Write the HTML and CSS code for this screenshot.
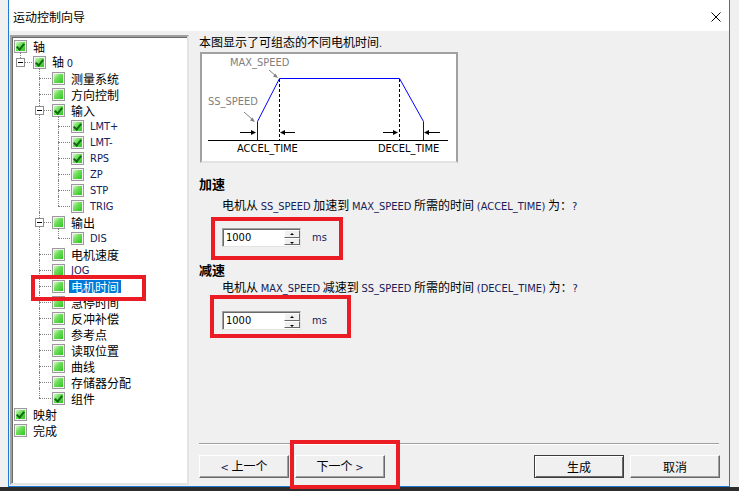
FILE: index.html
```html
<!DOCTYPE html>
<html>
	<head>
		<meta http-equiv="Content-Type" content="text/html; charset=UTF-8" />
		<title>运动控制向导</title>
		<link rel="stylesheet" href="styles.css">
	</head>
	<body>
		<div class="win">
			<div class="titlebar">
				<span class="title">运动控制向导</span>
				<svg class="close" width="10" height="10" viewBox="0 0 10 10">
					<path d="M0.5 0.5 L9.5 9.5 M9.5 0.5 L0.5 9.5" stroke="#000" stroke-width="1" fill="none"/>
				</svg>
			</div>
			<div class="content">
				<div class="tree-box">
					<ul class="tree">
						<li><div class="node"><b class="cb on"></b><span class="lbl">轴</span></div>
							<ul>
								<li><div class="node"><i class="exp"></i><b class="cb on"></b><span class="lbl">轴 <span class="lat">0</span></span></div>
									<ul>
										<li><div class="node"><b class="cb"></b><span class="lbl">测量系统</span></div></li>
										<li><div class="node"><b class="cb"></b><span class="lbl">方向控制</span></div></li>
										<li><div class="node"><i class="exp"></i><b class="cb on"></b><span class="lbl">输入</span></div>
											<ul>
												<li><div class="node"><b class="cb on"></b><span class="lbl lat">LMT+</span></div></li>
												<li><div class="node"><b class="cb on"></b><span class="lbl lat">LMT-</span></div></li>
												<li><div class="node"><b class="cb on"></b><span class="lbl lat">RPS</span></div></li>
												<li><div class="node"><b class="cb"></b><span class="lbl lat">ZP</span></div></li>
												<li><div class="node"><b class="cb"></b><span class="lbl lat">STP</span></div></li>
												<li><div class="node"><b class="cb"></b><span class="lbl lat">TRIG</span></div></li>
											</ul>
										</li>
										<li><div class="node"><i class="exp"></i><b class="cb"></b><span class="lbl">输出</span></div>
											<ul>
												<li><div class="node"><b class="cb"></b><span class="lbl lat">DIS</span></div></li>
											</ul>
										</li>
										<li><div class="node"><b class="cb"></b><span class="lbl">电机速度</span></div></li>
										<li><div class="node"><b class="cb"></b><span class="lbl lat">JOG</span></div></li>
										<li><div class="node"><b class="cb"></b><span class="lbl sel">电机时间</span></div></li>
										<li><div class="node"><b class="cb"></b><span class="lbl">急停时间</span></div></li>
										<li><div class="node"><b class="cb"></b><span class="lbl">反冲补偿</span></div></li>
										<li><div class="node"><b class="cb"></b><span class="lbl">参考点</span></div></li>
										<li><div class="node"><b class="cb"></b><span class="lbl">读取位置</span></div></li>
										<li><div class="node"><b class="cb"></b><span class="lbl">曲线</span></div></li>
										<li><div class="node"><b class="cb"></b><span class="lbl">存储器分配</span></div></li>
										<li><div class="node"><b class="cb on"></b><span class="lbl">组件</span></div></li>
									</ul>
								</li>
							</ul>
						</li>
						<li><div class="node"><b class="cb on"></b><span class="lbl">映射</span></div></li>
						<li><div class="node"><b class="cb"></b><span class="lbl">完成</span></div></li>
					</ul>
				</div>

				<div class="main">
					<div class="intro">本图显示了可组态的不同电机时间<span class="lat">.</span></div>
					<div class="chart">
						<svg width="254" height="107" viewBox="0 0 254 107">
							<line x1="6" y1="86.5" x2="246" y2="86.5" stroke="#000"/>
							<line x1="77.5" y1="25" x2="77.5" y2="86" stroke="#000" stroke-dasharray="3 2"/>
							<line x1="197.5" y1="25" x2="197.5" y2="86" stroke="#000" stroke-dasharray="3 2"/>
							<polyline points="55.5,86 55.5,67.5 77.5,24.5 197.5,24.5 221.5,67.5 221.5,86" fill="none" stroke="#0000ff"/>

							<g stroke="#000">
								<line x1="38" y1="78.5" x2="50" y2="78.5"/>
								<line x1="82" y1="78.5" x2="93" y2="78.5"/>
								<line x1="181" y1="78.5" x2="192" y2="78.5"/>
								<line x1="226" y1="78.5" x2="238" y2="78.5"/>
							</g>
							<g fill="#000">
								<polygon points="54,78.5 49,76 49,81"/>
								<polygon points="78,78.5 83,76 83,81"/>
								<polygon points="196,78.5 191,76 191,81"/>
								<polygon points="222,78.5 227,76 227,81"/>
							</g>

							<g stroke="#808080">
								<line x1="67" y1="16" x2="74" y2="22"/>
								<line x1="42" y1="58" x2="51" y2="66"/>
							</g>
							<g fill="#808080">
								<polygon points="76,24 71,22.5 73.5,19.5"/>
								<polygon points="53,68 48,66.5 50.5,63.5"/>
							</g>

							<text class="tag" x="28" y="12">MAX_SPEED</text>
							<text class="tag" x="6" y="51">SS_SPEED</text>
							<text class="axis" x="35" y="98">ACCEL_TIME</text>
							<text class="axis" x="176" y="98">DECEL_TIME</text>
						</svg>
					</div>

					<div class="head">加速</div>
					<div class="desc">电机从 <span class="lat">SS_SPEED</span> 加速到 <span class="lat">MAX_SPEED</span> 所需的时间 <span class="lat">(ACCEL_TIME)</span> 为：<span class="lat">?</span></div>
					<div class="field">
						<div class="spin">
							<span class="spin-val lat">1000</span>
							<span class="spin-btns"><i class="up"></i><i class="dn"></i></span>
						</div>
						<span class="unit lat">ms</span>
					</div>

					<div class="head second">减速</div>
					<div class="desc tight">电机从 <span class="lat">MAX_SPEED</span> 减速到 <span class="lat">SS_SPEED</span> 所需的时间 <span class="lat">(DECEL_TIME)</span> 为：<span class="lat">?</span></div>
					<div class="field low">
						<div class="spin">
							<span class="spin-val lat">1000</span>
							<span class="spin-btns"><i class="up"></i><i class="dn"></i></span>
						</div>
						<span class="unit lat">ms</span>
					</div>

					<div class="sep"></div>
					<div class="buttons">
						<button class="btn"><span class="lat">&lt;</span> 上一个</button>
						<button class="btn">下一个 <span class="lat">&gt;</span></button>
						<button class="btn def push">生成</button>
						<button class="btn">取消</button>
					</div>
				</div>
			</div>
		</div>
		<div class="taskbar"></div>

		<div class="mark m-tree"></div>
		<div class="mark m-accel"></div>
		<div class="mark m-decel"></div>
		<div class="mark m-next"></div>
	</body>
</html>
```

FILE: styles.css
```css
* { box-sizing: border-box; }
html, body { margin: 0; padding: 0; }
body {
	position: relative;
	width: 739px;
	height: 491px;
	overflow: hidden;
	display: flex;
	flex-direction: column;
	background: #f0f0f0;
	color: #000;
	font: 12px/14px "Noto Sans CJK SC", sans-serif;
}
.lat {
	font-family: "DejaVu Sans Condensed", "Liberation Sans", sans-serif;
	font-size: 11px;
	color: #16205a;
}

/* window frame */
.win {
	width: 722px;
	height: 487px;
	margin-left: 8px;
	border: 1px solid #1c7bd6;
	border-top: 0;
	display: flex;
	flex-direction: column;
	flex: none;
}
.titlebar {
	height: 31px;
	background: #fff;
	display: flex;
	align-items: center;
	justify-content: space-between;
	padding: 3px 8px 0 4px;
}
.title { font-size: 12px; }
.taskbar { flex: 1; background: #2d2d2d; }

.content {
	flex: 1;
	display: flex;
	padding: 4px 0 0 1px;
}

/* tree */
.tree-box {
	width: 179px;
	height: 450px;
	flex: none;
	background: #fff;
	border: 2px solid;
	border-color: #a0a0a0 #e3e3e3 #e3e3e3 #a0a0a0;
	box-shadow: inset 1px 1px 0 #696969;
}
.tree, .tree ul {
	list-style: none;
	margin: 0;
	padding: 0;
}
.tree { padding-top: 1px; }
.tree ul { padding-left: 19px; }
.tree li { position: relative; }
.tree ul > li:before {
	content: "";
	position: absolute;
	left: -11px;
	top: -2px;
	bottom: 0;
	border-left: 1px dotted #808080;
}
.tree ul > li:last-child:before { bottom: auto; height: 10px; }
.tree ul > li:after {
	content: "";
	position: absolute;
	left: -11px;
	top: 8px;
	width: 12px;
	border-top: 1px dotted #808080;
}
.node {
	position: relative;
	display: flex;
	align-items: center;
	height: 16px;
	padding-left: 2px;
	white-space: nowrap;
}
.cb {
	position: relative;
	width: 13px;
	height: 13px;
	flex: none;
	margin-right: 4px;
	padding: 1px;
	border: 1px solid #9a9a9a;
	background: linear-gradient(135deg, #d9f8cc 0%, #6ee05a 40%, #34c423 100%) content-box, #f2f2f2;
}
.cb.on:after {
	content: "";
	position: absolute;
	left: 3px;
	top: 1px;
	width: 3px;
	height: 6px;
	border: solid #0f6a12;
	border-width: 0 2px 2px 0;
	transform: rotate(40deg);
}
.exp {
	position: absolute;
	left: -15px;
	top: 4px;
	width: 9px;
	height: 9px;
	z-index: 1;
	border: 1px solid #8c8c8c;
	background: #fff;
}
.exp:after {
	content: "";
	position: absolute;
	left: 1px;
	top: 3px;
	width: 5px;
	height: 1px;
	background: #000;
}
.lbl { padding: 0 2px; line-height: 13px; }
.lbl.sel { background: #0078d7; color: #fff; }

/* right side */
.main {
	flex: 1;
	display: flex;
	flex-direction: column;
	padding: 0 9px 8px 10px;
}
.intro { height: 14px; }
.chart {
	width: 258px;
	height: 111px;
	margin: 3px 0 0 1px;
	background: #fff;
	border: 2px solid #a0a0a0;
	border-bottom-color: #e3e3e3;
}
.chart svg { display: block; }
.chart text {
	font-family: "DejaVu Sans Condensed", "Liberation Sans", sans-serif;
	font-size: 11px;
}
.chart .tag { fill: #808080; }
.chart .axis { fill: #000; }

.head {
	margin-top: 13px;
	font-size: 13px;
	font-weight: bold;
	line-height: 16px;
}
.head.second { margin-top: 15px; }
.desc { margin-top: 6px; padding-left: 23px; }
.desc.tight { margin-top: 2px; }

.field {
	display: flex;
	align-items: center;
	margin: 14px 0 0 23px;
}
.field.low { margin-top: 15px; }
.spin {
	display: flex;
	width: 79px;
	height: 19px;
	background: #fff;
	border: 1px solid #a0a0a0;
	border-right-color: #e3e3e3;
	border-bottom-color: #e3e3e3;
	box-shadow: inset 1px 1px 0 #696969;
}
.spin-val {
	flex: 1;
	padding: 1px 0 0 3px;
	line-height: 15px;
	color: #000;
}
.spin-btns {
	width: 16px;
	display: flex;
	flex-direction: column;
	padding: 1px 0 1px 0;
}
.spin-btns i {
	flex: 1;
	position: relative;
	background: #f0f0f0;
	border: 1px solid;
	border-color: #fff #696969 #696969 #fff;
}
.spin-btns i:after {
	content: "";
	position: absolute;
	left: 5px;
	border-left: 2px solid transparent;
	border-right: 2px solid transparent;
}
.spin-btns .up:after { top: 2px; border-bottom: 2px solid #000; }
.spin-btns .dn:after { top: 3px; border-top: 2px solid #000; }
.unit { margin-left: 11px; }

.sep {
	margin: auto 1px 0 0;
	height: 2px;
	border-top: 1px solid #a0a0a0;
	border-bottom: 1px solid #fff;
}
.buttons {
	display: flex;
	margin-top: 10px;
}
.btn {
	width: 90px;
	height: 23px;
	margin: 0 6px 0 0;
	padding: 0;
	background: #f0f0f0;
	border: 1px solid;
	border-color: #fff #696969 #696969 #fff;
	box-shadow: inset -1px -1px 0 #a0a0a0;
	font: 12px/14px "Noto Sans CJK SC", sans-serif;
	color: #000;
}
.btn:last-child { margin-right: 0; }
.btn.push { margin-left: auto; }
.btn.def {
	border-color: #3c3c3c;
	box-shadow: inset 1px 1px 0 #fff, inset -1px -1px 0 #696969;
}

/* red annotation frames */
.mark {
	position: absolute;
	border: 4px solid #ec1c24;
}
.m-tree  { left: 31px;  top: 275px; width: 115px; height: 26px; }
.m-accel { left: 211px; top: 217px; width: 132px; height: 43px; }
.m-decel { left: 210px; top: 295px; width: 141px; height: 43px; }
.m-next  { left: 290px; top: 440px; width: 110px; height: 49px; }
```
